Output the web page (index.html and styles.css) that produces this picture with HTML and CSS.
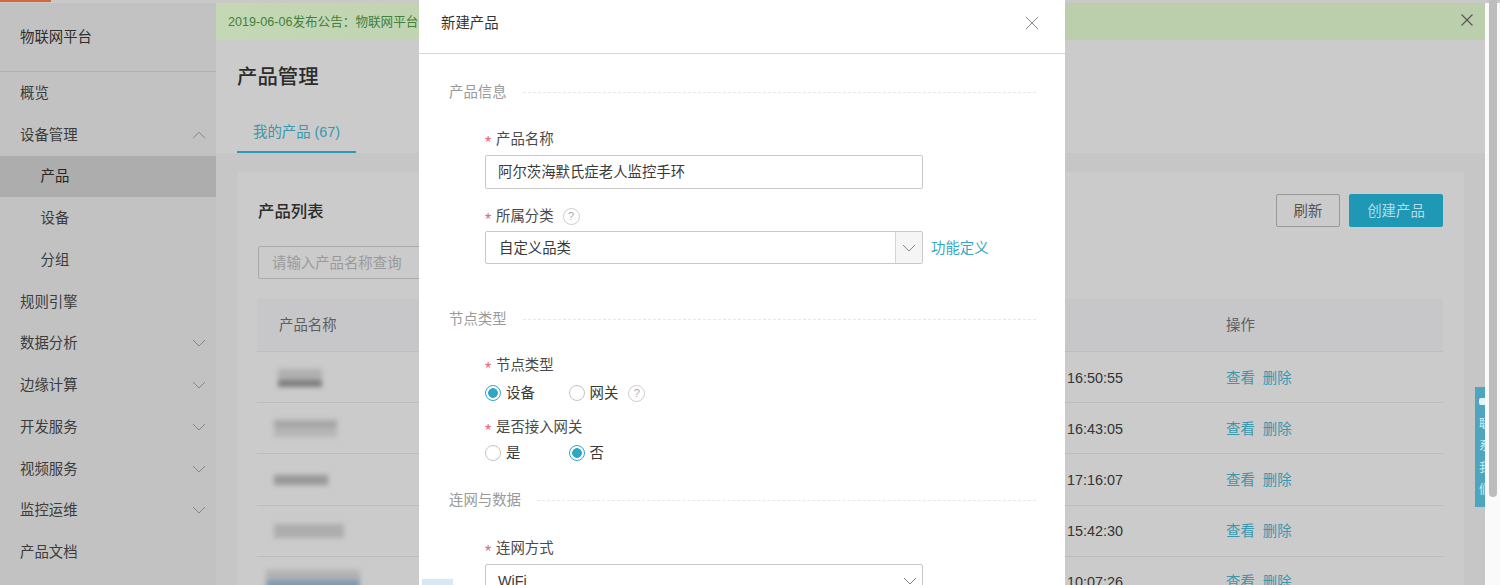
FILE: index.html
```html
<!DOCTYPE html>
<html lang="zh-CN">
<head>
<meta charset="utf-8">
<title>物联网平台</title>
<link rel="stylesheet" href="styles.css">
</head>
<body>
<div class="strip"><span class="strip-accent"></span></div>
<div class="shell">
  <aside class="sidebar">
    <div class="brand">物联网平台</div>
    <nav>
      <div class="nav-item">概览</div>
      <div class="nav-item">设备管理<svg class="chev" viewBox="0 0 14 8"><path d="M1 7.2 7 1.2l6 6"/></svg></div>
      <div class="nav-item sub active">产品</div>
      <div class="nav-item sub">设备</div>
      <div class="nav-item sub">分组</div>
      <div class="nav-item">规则引擎</div>
      <div class="nav-item">数据分析<svg class="chev" viewBox="0 0 14 8"><path d="m1 1 6 6 6-6"/></svg></div>
      <div class="nav-item">边缘计算<svg class="chev" viewBox="0 0 14 8"><path d="m1 1 6 6 6-6"/></svg></div>
      <div class="nav-item">开发服务<svg class="chev" viewBox="0 0 14 8"><path d="m1 1 6 6 6-6"/></svg></div>
      <div class="nav-item">视频服务<svg class="chev" viewBox="0 0 14 8"><path d="m1 1 6 6 6-6"/></svg></div>
      <div class="nav-item">监控运维<svg class="chev" viewBox="0 0 14 8"><path d="m1 1 6 6 6-6"/></svg></div>
      <div class="nav-item">产品文档</div>
    </nav>
  </aside>

  <main class="main">
    <div class="notice">
      <span>2019-06-06发布公告：物联网平台</span>
      <svg class="notice-close" viewBox="0 0 14 14"><path d="m1.5 1.5 11 11m0-11-11 11"/></svg>
    </div>
    <h1 class="page-title">产品管理</h1>
    <div class="tabs"><div class="tab">我的产品 (67)</div></div>
    <div class="content">
      <section class="panel">
        <div class="panel-head">
          <h2 class="panel-title">产品列表</h2>
          <div class="actions">
            <button class="btn">刷新</button>
            <button class="btn primary">创建产品</button>
          </div>
        </div>
        <div class="search">请输入产品名称查询</div>
        <div class="table">
          <div class="row head"><div class="name-head">产品名称</div><div></div><div>操作</div></div>
          <div class="row"><div><div class="smudge s1"></div></div><div class="time">16:50:55</div><div class="ops"><a>查看</a><a>删除</a></div></div>
          <div class="row"><div><div class="smudge s2"></div></div><div class="time">16:43:05</div><div class="ops"><a>查看</a><a>删除</a></div></div>
          <div class="row"><div><div class="smudge s3"></div></div><div class="time">17:16:07</div><div class="ops"><a>查看</a><a>删除</a></div></div>
          <div class="row"><div><div class="smudge s4"></div></div><div class="time">15:42:30</div><div class="ops"><a>查看</a><a>删除</a></div></div>
          <div class="row"><div><div class="smudge s5"></div></div><div class="time">10:07:26</div><div class="ops"><a>查看</a><a>删除</a></div></div>
        </div>
      </section>
    </div>
    <div class="side-tab"><span>联系我们</span></div>
  </main>

  <div class="scrollbar"><div class="thumb"></div></div>
</div>

<div class="modal">
  <header class="modal-head">
    <span>新建产品</span>
    <svg class="modal-close" viewBox="0 0 14 14"><path d="m.8.8 12.4 12.4m0-12.4L.8 13.2"/></svg>
  </header>
  <div class="modal-body">
    <div class="section-title"><span>产品信息</span><i></i></div>
    <div class="label l-first"><b>*</b>产品名称</div>
    <div class="field field-tall">阿尔茨海默氏症老人监控手环</div>
    <div class="label l-mid"><b>*</b>所属分类<span class="help help-a">?</span></div>
    <div class="select-row">
      <div class="field select"><span class="select-text">自定义品类</span><span class="select-arrow"><svg class="chev" viewBox="0 0 14 8"><path d="m1 1 6 6 6-6"/></svg></span></div>
      <a class="link">功能定义</a>
    </div>
    <div class="section-title s-second"><span>节点类型</span><i></i></div>
    <div class="label l-node"><b>*</b>节点类型</div>
    <div class="radios r-first">
      <label class="radio"><span class="dot on"></span>设备</label>
      <label class="radio"><span class="dot"></span>网关<span class="help help-b">?</span></label>
    </div>
    <div class="label l-radio"><b>*</b>是否接入网关</div>
    <div class="radios r-second">
      <label class="radio"><span class="dot"></span>是</label>
      <label class="radio"><span class="dot on"></span>否</label>
    </div>
    <div class="section-title s-third"><span>连网与数据</span><i></i></div>
    <div class="label l-net"><b>*</b>连网方式</div>
    <div class="field wifi"><span>WiFi</span><svg class="chev" viewBox="0 0 14 8"><path d="m1 1 6 6 6-6"/></svg></div>
  </div>
  <div class="chip"></div>
</div>
</body>
</html>
```
FILE: styles.css
```css
* { box-sizing: border-box; }
html, body { margin: 0; height: 585px; overflow: hidden; }
body {
  position: relative;
  display: flex;
  flex-direction: column;
  background: #cbcbcb;
  color: #333;
  font: 14.4px/20px "Liberation Sans", "Noto Sans CJK SC", sans-serif;
}
h1, h2 { margin: 0; }

.strip { height: 3px; flex: none; background: #c9c9c9; }
.strip-accent { display: block; width: 51px; height: 2px; background: #d0693a; }

.shell { flex: 1; display: flex; min-height: 0; }

/* sidebar */
.sidebar { width: 216px; flex: none; background: #c2c2c2; }
.brand {
  height: 69px;
  padding: 0 20px 1px;
  display: flex;
  align-items: center;
  border-bottom: 1px solid #b0b0b0;
  color: #2e2e2e;
}
.nav-item {
  height: 41.75px;
  padding: 0 10px 0 20px;
  display: flex;
  align-items: center;
  justify-content: space-between;
  color: #3c3c3c;
}
.nav-item.sub { padding-left: 40.5px; }
.nav-item.active { background: #adadad; color: #262626; }
.chev { width: 14px; height: 8px; flex: none; fill: none; stroke: #858585; stroke-width: 1; }

/* main */
.main { flex: 1; min-width: 0; position: relative; display: flex; flex-direction: column; }
.notice {
  height: 37px;
  flex: none;
  padding: 0 11px 0 12px;
  display: flex;
  align-items: center;
  justify-content: space-between;
  background: linear-gradient(90deg, #c5d8b6, #bccfad 40%);
  color: #43803a;
  font-size: 12.6px;
}
.notice-close { width: 14px; height: 14px; fill: none; stroke: #555; stroke-width: 1.1; margin-top: -4px; }
.page-title {
  margin: 23px 21px 0;
  font-size: 20.4px;
  line-height: 28px;
  font-weight: 500;
  color: #2c2c2c;
}
.tabs { margin-top: 22px; padding-left: 21px; flex: none; }
.tab {
  width: 119px;
  height: 40px;
  padding: 9px 0 0 16px;
  border-bottom: 2px solid #2b9cb5;
  color: #3a97ad;
}
.content { flex: 1; min-height: 0; padding: 19px 21px 0; background: #c6c6c6; }
.panel { height: 100%; padding: 22px 21px 0 20px; background: #cbcbcb; overflow: hidden; }
.panel-head { display: flex; justify-content: space-between; align-items: center; padding-left: 1px; }
.panel-title { font-size: 16.4px; font-weight: 500; color: #2c2c2c; }
.actions { display: flex; gap: 9px; }
.btn {
  height: 33px;
  width: 64px;
  border: 1px solid #999;
  border-radius: 2px;
  background: transparent;
  color: #555;
  font: inherit;
  padding: 0;
}
.btn.primary { width: 94px; border-color: #1f98b6; background: #1f98b6; color: #b5dbe6; }
.search {
  width: 220px;
  height: 33px;
  margin: 19px 0 20px 1px;
  padding: 0 13px;
  display: flex;
  align-items: center;
  border: 1px solid #a9a9a9;
  border-radius: 2px;
  color: #9a9a9a;
}
.row {
  height: 51.2px;
  padding-top: 1px;
  display: grid;
  grid-template-columns: 810px 159px 1fr;
  align-items: center;
  border-bottom: 1px solid #bdbdbd;
}
.row.head { height: 53px; padding-top: 0; background: #c7c7c9; color: #5e5e5e; border-bottom: 1px solid #bebec2; }
.name-head { padding-left: 22px; }
.time { color: #333; }
.ops { display: flex; gap: 8px; color: #3a97ad; }
.smudge { filter: blur(2.5px); background: #a4a4a4; }
.s1 { width: 44px; height: 18px; margin-left: 21px; background: linear-gradient(180deg, #b0b0b0 0 60%, #7c7c7c 60%); }
.s2 { width: 63px; height: 17px; margin-left: 17px; background: linear-gradient(180deg, #a6a6a6 0 50%, #b6b6b6 50%); }
.s3 { width: 54px; height: 10px; margin-left: 17px; background: #989898; }
.s4 { width: 70px; height: 14px; margin-left: 17px; background: #adadad; }
.s5 { width: 94px; height: 24px; margin-left: 9px; background: linear-gradient(180deg, #b2b2b2 0 42%, #7f9ab5 42%); }

.side-tab {
  position: absolute;
  top: 384px;
  right: 0;
  width: 10px;
  height: 120px;
  padding: 26px 0 0 4px;
  background: #4da6bd;
  color: #d8eef3;
  overflow: hidden;
  font-size: 12px;
  line-height: 22px;
}
.side-tab::before {
  content: "";
  position: absolute;
  left: 4px;
  top: 11px;
  width: 6px;
  height: 7px;
  border-radius: 2px 0 0 2px;
  background: #e6f2f5;
}
.side-tab span { display: block; width: 12px; }

.scrollbar { width: 15px; flex: none; padding-left: 4px; background: #fafafa; }
.thumb { width: 8px; height: 497px; margin-top: -3px; border-radius: 0 0 4px 4px; background: #bdbdbd; }

/* modal */
.modal {
  position: absolute;
  left: 419px;
  top: 0;
  width: 646px;
  height: 585px;
  background: #fff;
  overflow: hidden;
  color: #3a3a3a;
}
.modal-head {
  height: 54px;
  padding: 0 26px 8px 22px;
  display: flex;
  align-items: center;
  justify-content: space-between;
  border-bottom: 1px solid #d6d6d6;
  color: #333;
}
.modal-close { width: 14px; height: 14px; fill: none; stroke: #8c8c8c; stroke-width: 1; }
.modal-body { padding: 28px 29px 0 30px; }
.section-title { display: flex; align-items: center; gap: 16px; color: #9a9a9a; }
.section-title i { flex: 1; border-top: 1px dashed #e8e8e8; }
.s-second { margin-top: 45px; }
.s-third { margin-top: 27px; }
.label { margin-left: 36px; display: flex; align-items: center; color: #4a4a4a; }
.label b { width: 11px; height: 20px; padding-top: 4px; color: #e0607a; font-weight: 400; font-size: 16px; line-height: 20px; }
.l-first { margin-top: 27px; }
.l-node { margin-top: 26px; }
.l-net { margin-top: 28px; }
.l-mid { margin-top: 17px; }
.l-radio { margin-top: 14px; }
.help {
  width: 17px;
  height: 17px;
  border: 1px solid #ccc;
  border-radius: 50%;
  display: flex;
  align-items: center;
  justify-content: center;
  font-size: 11px;
  line-height: 1;
  color: #aaa;
}
.help-a { margin-left: 9px; }
.help-b { margin-left: 10px; }
.field {
  width: 438px;
  margin: 6px 0 0 36px;
  display: flex;
  align-items: center;
  border: 1px solid #c9c9c9;
  border-radius: 2px;
}
.field-tall { height: 34px; padding-left: 12px; }
.select-row { display: flex; align-items: center; margin-top: 5px; }
.select { height: 33px; margin-top: 0; padding-left: 13px; justify-content: space-between; }
.select-arrow {
  width: 27px;
  height: 100%;
  display: flex;
  align-items: center;
  justify-content: center;
  background: #f5f5f5;
  border-left: 1px solid #d4d4d4;
}
.link { margin-left: 8px; color: #35a7c3; }
.radios { margin-left: 36px; display: flex; }
.r-first { margin-top: 8px; }
.r-second { margin-top: 6px; }
.radio { width: 83.5px; display: flex; align-items: center; white-space: nowrap; }
.dot {
  width: 16px;
  height: 16px;
  margin-right: 5px;
  flex: none;
  border: 1px solid #c4c4c4;
  border-radius: 50%;
}
.dot.on { border-color: #2ea6c4; background: radial-gradient(circle, #2ea6c4 0 4.5px, #fff 5.2px); }
.wifi { height: 33px; padding: 0 5px 0 12px; justify-content: space-between; }
.chip { position: absolute; left: 3px; bottom: 0; width: 31px; height: 6px; background: #d6e8f7; }
```
